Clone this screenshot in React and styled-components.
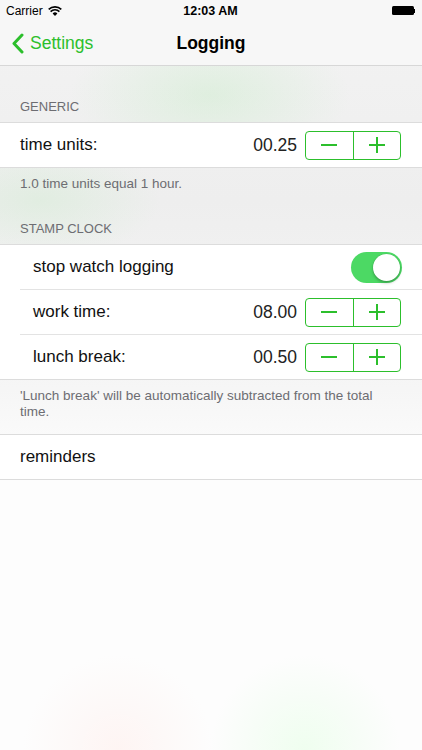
import React, { useState } from 'react';
import styled, { createGlobalStyle } from 'styled-components';

const tint = '#2cbf2c';

const GlobalStyle = createGlobalStyle`
  html, body {
    margin: 0;
    padding: 0;
  }
  body {
    font-family: "Liberation Sans", Arial, sans-serif;
    color: #000;
    -webkit-font-smoothing: antialiased;
  }
`;

const Screen = styled.div`
  width: 422px;
  height: 750px;
  overflow: hidden;
  display: flex;
  flex-direction: column;
  background:
    radial-gradient(ellipse 140px 70px at 210px 95px, rgba(190, 235, 190, 0.35), rgba(190, 235, 190, 0) 100%),
    radial-gradient(ellipse 120px 60px at 40px 200px, rgba(200, 235, 200, 0.35), rgba(200, 235, 200, 0) 100%),
    radial-gradient(circle 95px at 305px 750px, rgba(225, 255, 225, 0.5), rgba(225, 255, 225, 0) 100%),
    radial-gradient(circle 95px at 118px 750px, rgba(255, 232, 228, 0.4), rgba(255, 232, 228, 0) 100%),
    linear-gradient(#f3f3f3 0px, #eeeeee 200px, #f6f6f6 390px, #fdfdfd 470px, #fdfdfd 100%);
`;

const StatusBar = styled.div`
  height: 22px;
  display: grid;
  grid-template-columns: 1fr auto 1fr;
  align-items: center;
  padding: 0 7px 0 6px;
  font-size: 12px;
  background: #f7f7f7;
`;

const Carrier = styled.div`
  display: flex;
  align-items: center;
  gap: 5px;
`;

const Clock = styled.div`
  font-weight: bold;
  font-size: 12.5px;
`;

const Battery = styled.div`
  justify-self: end;
  display: flex;
  align-items: center;
  margin-top: -1px;

  &::before {
    content: '';
    width: 22px;
    height: 9px;
    background: #000;
    border-radius: 1.5px;
  }
  &::after {
    content: '';
    width: 1.5px;
    height: 4px;
    background: #000;
  }
`;

const NavBar = styled.div`
  height: 43px;
  display: grid;
  grid-template-columns: 1fr auto 1fr;
  align-items: center;
  background: #f7f7f7;
  border-bottom: 1px solid #d7d7d7;
`;

const BackButton = styled.button`
  display: flex;
  align-items: center;
  gap: 6px;
  padding: 0 0 0 12px;
  border: none;
  background: none;
  font: inherit;
  font-size: 17.5px;
  color: ${tint};
  cursor: pointer;
`;

const Title = styled.div`
  font-size: 17.5px;
  font-weight: bold;
`;

const SectionHeader = styled.div`
  padding: ${({ $top }) => $top}px 20px 7px;
  font-size: 13px;
  line-height: 16px;
  color: #6d6d72;
  text-transform: uppercase;
`;

const Group = styled.div`
  background: #fff;
  border-top: 1px solid #dcdcdc;
  border-bottom: 1px solid #dcdcdc;
`;

const Row = styled.div`
  box-sizing: border-box;
  height: 44px;
  display: flex;
  align-items: center;
  padding: 0 20px 0 ${({ $indent }) => ($indent ? 33 : 20)}px;
  font-size: 17px;
  color: #111;

  & + & {
    height: 45px;
    border-top: 1px solid #e3e3e3;
    margin-left: 20px;
    padding-left: 13px;
  }
`;

const Label = styled.div`
  flex: 1;
`;

const Value = styled.div`
  margin-right: 8px;
  font-size: 17.5px;
  color: #222;
`;

const Footer = styled.div`
  padding: 8px 28px ${({ $bottom }) => $bottom}px 20px;
  font-size: 13.5px;
  line-height: 16px;
  color: #6d6d72;
`;

const Stepper = styled.div`
  display: flex;
  width: 94px;
  height: 27px;
  border: 1px solid ${tint};
  border-radius: 4px;
  margin-right: 1px;
`;

const StepButton = styled.button`
  flex: 1;
  display: flex;
  align-items: center;
  justify-content: center;
  padding: 0;
  border: none;
  background: none;
  cursor: pointer;

  & + & {
    border-left: 1px solid ${tint};
  }
`;

const Switch = styled.button`
  position: relative;
  width: 51px;
  height: 31px;
  padding: 0;
  border: none;
  border-radius: 16px;
  background: ${({ $on }) => ($on ? '#4cd964' : '#e5e5e5')};
  cursor: pointer;
`;

const Knob = styled.span`
  position: absolute;
  top: 2px;
  left: ${({ $on }) => ($on ? 22 : 2)}px;
  width: 27px;
  height: 27px;
  border-radius: 50%;
  background: #fff;
  box-shadow: 0 2px 3px rgba(0, 0, 0, 0.25), 0 0 0 0.5px rgba(0, 0, 0, 0.08);
`;

const WifiIcon = () => (
  <svg width="14" height="10" viewBox="0 0 14 10">
    <path d="M7 10 L4.6 7.4 A3.4 3.4 0 0 1 9.4 7.4 Z" fill="#000" />
    <path d="M2.6 5.6 A6.2 6.2 0 0 1 11.4 5.6" stroke="#000" strokeWidth="1.6" fill="none" />
    <path d="M0.7 3.4 A9 9 0 0 1 13.3 3.4" stroke="#000" strokeWidth="1.6" fill="none" />
  </svg>
);

const Chevron = () => (
  <svg width="12" height="21" viewBox="0 0 12 21">
    <path d="M10 2 L2 10.5 L10 19" stroke={tint} strokeWidth="3" fill="none" strokeLinecap="round" strokeLinejoin="round" />
  </svg>
);

const Minus = () => (
  <svg width="16" height="16" viewBox="0 0 16 16">
    <path d="M0 8 H16" stroke={tint} strokeWidth="2" />
  </svg>
);

const Plus = () => (
  <svg width="16" height="16" viewBox="0 0 16 16">
    <path d="M0 8 H16 M8 0 V16" stroke={tint} strokeWidth="2" />
  </svg>
);

const StepperRow = ({ label, value, indent }) => (
  <Row $indent={indent}>
    <Label>{label}</Label>
    <Value>{value}</Value>
    <Stepper>
      <StepButton aria-label="decrease"><Minus /></StepButton>
      <StepButton aria-label="increase"><Plus /></StepButton>
    </Stepper>
  </Row>
);

export default function App() {
  const [stopWatch, setStopWatch] = useState(true);

  return (
    <Screen>
      <GlobalStyle />
      <StatusBar>
        <Carrier>Carrier <WifiIcon /></Carrier>
        <Clock>12:03 AM</Clock>
        <Battery />
      </StatusBar>

      <NavBar>
        <BackButton><Chevron />Settings</BackButton>
        <Title>Logging</Title>
        <div />
      </NavBar>

      <SectionHeader $top={33}>Generic</SectionHeader>
      <Group>
        <StepperRow label="time units:" value="00.25" />
      </Group>
      <Footer $bottom={29}>1.0 time units equal 1 hour.</Footer>

      <SectionHeader $top={0}>Stamp clock</SectionHeader>
      <Group>
        <Row $indent>
          <Label>stop watch logging</Label>
          <Switch $on={stopWatch} onClick={() => setStopWatch(!stopWatch)}>
            <Knob $on={stopWatch} />
          </Switch>
        </Row>
        <StepperRow label="work time:" value="08.00" indent />
        <StepperRow label="lunch break:" value="00.50" indent />
      </Group>
      <Footer $bottom={14}>
        'Lunch break' will be automatically subtracted from the total time.
      </Footer>

      <Group>
        <Row>
          <Label>reminders</Label>
        </Row>
      </Group>
    </Screen>
  );
}
